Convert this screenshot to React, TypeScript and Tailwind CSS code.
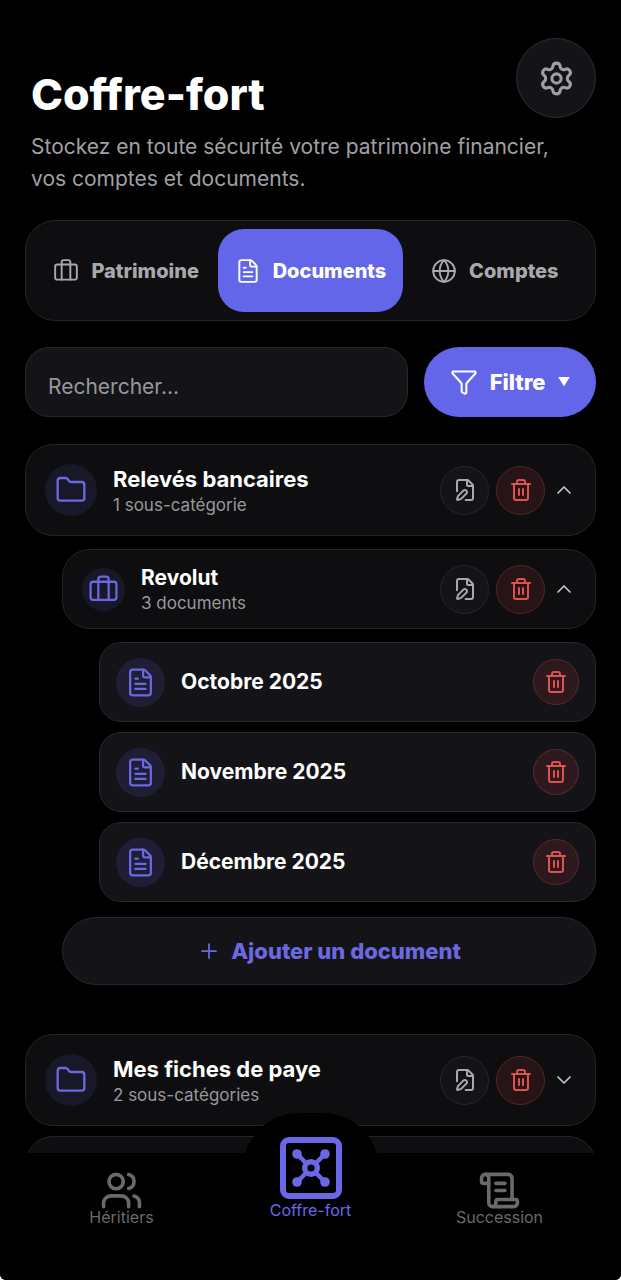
import { useState } from "react";
import type { ReactNode } from "react";
import {
  Briefcase,
  ChevronDown,
  ChevronUp,
  FilePen,
  FileText,
  Folder,
  Funnel,
  Globe,
  Plus,
  ScrollText,
  Settings,
  Trash2,
  Users,
} from "lucide-react";

const tabs = [
  { id: "patrimoine", label: "Patrimoine", icon: Briefcase },
  { id: "documents", label: "Documents", icon: FileText },
  { id: "comptes", label: "Comptes", icon: Globe },
];

const documents = ["Octobre 2025", "Novembre 2025", "Décembre 2025"];

function VaultIcon() {
  return (
    <svg width="62" height="62" viewBox="0 0 62 62" fill="none" stroke="currentColor" aria-hidden="true">
      <rect x="3" y="3" width="56" height="56" rx="6" strokeWidth="6" />
      <path d="M17 17l28 28M45 17L17 45" strokeWidth="4.5" />
      <g fill="currentColor" stroke="none">
        <circle cx="17" cy="17" r="4.8" />
        <circle cx="45" cy="17" r="4.8" />
        <circle cx="17" cy="45" r="4.8" />
        <circle cx="45" cy="45" r="4.8" />
      </g>
      <circle cx="31" cy="31" r="6.3" fill="#000" strokeWidth="5.4" />
    </svg>
  );
}

function DeleteButton({ label, small }: { label: string; small?: boolean }) {
  return (
    <button
      aria-label={label}
      className={`flex shrink-0 items-center justify-center rounded-full border text-[#e0524d] ${
        small ? "size-[46px] border-[#5a292b] bg-[#2d191d]" : "size-[49px] border-[#572523] bg-[#271416]"
      }`}
    >
      <Trash2 size={24} />
    </button>
  );
}

interface CategoryProps {
  title: string;
  subtitle: string;
  icon: ReactNode;
  sub?: boolean;
  defaultOpen?: boolean;
  children?: ReactNode;
}

function Category({ title, subtitle, icon, sub, defaultOpen = false, children }: CategoryProps) {
  const [open, setOpen] = useState(defaultOpen);

  return (
    <div>
      <div
        className={`flex items-center rounded-[28px] border border-[#242428] bg-[#0e0e10] px-[19px] ${
          sub ? "h-20" : "h-[92px]"
        }`}
      >
        <div
          className={`flex shrink-0 items-center justify-center rounded-full bg-[#181829] text-[#6b68e0] ${
            sub ? "size-[43px]" : "size-[52px]"
          }`}
        >
          {icon}
        </div>
        <div className="ml-4 min-w-0 flex-1 pt-0.5">
          <h2 className={`truncate font-bold text-white ${sub ? "text-[21px] leading-[26px]" : "text-[22px] leading-7"}`}>
            {title}
          </h2>
          <p className="text-[17px] leading-6 text-[#98989c]">{subtitle}</p>
        </div>
        <div className="flex items-center gap-[7px]">
          <button
            aria-label={`Renommer ${title}`}
            className="flex size-[49px] items-center justify-center rounded-full border border-[#27272b] bg-[#141418] text-[#a9a9ad]"
          >
            <FilePen size={24} />
          </button>
          <DeleteButton label={`Supprimer ${title}`} />
          <button
            aria-label={open ? "Replier" : "Déplier"}
            onClick={() => setOpen(!open)}
            className="flex items-center justify-center py-2 text-[#c4c4c8]"
          >
            {open ? <ChevronUp size={24} strokeWidth={1.75} /> : <ChevronDown size={24} strokeWidth={1.75} />}
          </button>
        </div>
      </div>
      {open && children}
    </div>
  );
}

export default function App() {
  const [tab, setTab] = useState("documents");
  const [search, setSearch] = useState("");

  return (
    <div className="h-screen bg-white">
      <div className="flex h-full flex-col overflow-hidden rounded-b-md bg-black font-['Inter',sans-serif]">
        <main className="min-h-0 flex-1 overflow-y-auto px-[25px] pt-[38px] [scrollbar-width:none]">
          <header>
            <div className="flex items-start justify-between pl-[6px]">
              <h1 className="pt-[30px] text-[43px] leading-[52px] font-extrabold text-white">Coffre-fort</h1>
              <button
                aria-label="Paramètres"
                className="flex size-20 items-center justify-center rounded-full border border-[#2d2d30] bg-[#141418] text-[#a0a0a3]"
              >
                <Settings size={37} />
              </button>
            </div>
            <p className="mt-[11px] pr-8 pl-[6px] text-[21px] leading-8 text-[#a0a0a3]">
              Stockez en toute sécurité votre patrimoine financier, vos comptes et documents.
            </p>
          </header>

          {/* Tabs */}
          <div className="mt-[25px] flex rounded-[30px] border border-[#242428] bg-[#0e0e10] p-2">
            {tabs.map(({ id, label, icon: Icon }) => (
              <button
                key={id}
                onClick={() => setTab(id)}
                className={`flex h-[83px] flex-1 basis-0 items-center justify-center gap-3 rounded-[26px] text-[20px] font-extrabold ${
                  tab === id ? "bg-[#6366e8] text-white" : "text-[#a9a9ad]"
                }`}
              >
                <Icon size={26} strokeWidth={1.75} className="shrink-0" />
                {label}
              </button>
            ))}
          </div>

          {/* Search and filter */}
          <div className="mt-[26px] flex gap-4">
            <input
              type="text"
              aria-label="Rechercher"
              placeholder="Rechercher..."
              value={search}
              onChange={(e) => setSearch(e.target.value)}
              className="h-[70px] min-w-0 flex-1 rounded-3xl border border-[#28282c] bg-[#141418] px-[22px] pt-2 text-[21px] text-white outline-none placeholder:text-[#98989c]"
            />
            <button className="flex h-[70px] w-[172px] items-center justify-center gap-3 rounded-full bg-[#6366e8] text-[22px] font-extrabold text-white">
              <Funnel size={28} strokeWidth={1.75} />
              Filtre
              <span className="text-xs">▼</span>
            </button>
          </div>

          <div className="mt-[27px]">
            <Category
              title="Relevés bancaires"
              subtitle="1 sous-catégorie"
              icon={<Folder size={32} strokeWidth={1.75} />}
              defaultOpen
            >
              <div className="mt-[13px] pl-[37px]">
                <Category
                  title="Revolut"
                  subtitle="3 documents"
                  icon={<Briefcase size={31} strokeWidth={1.75} />}
                  sub
                  defaultOpen
                >
                  <ul className="mt-[13px] flex flex-col gap-[10px] pl-[37px]">
                    {documents.map((name) => (
                      <li
                        key={name}
                        className="flex h-20 items-center gap-4 rounded-[22px] border border-[#28282c] bg-[#141418] px-4"
                      >
                        <div className="flex size-[49px] items-center justify-center rounded-full bg-[#1f1e35] text-[#6b68e0]">
                          <FileText size={31} strokeWidth={1.75} />
                        </div>
                        <span className="flex-1 text-[21px] font-bold text-white">{name}</span>
                        <DeleteButton label={`Supprimer ${name}`} small />
                      </li>
                    ))}
                  </ul>
                </Category>
                <button className="mt-[15px] flex h-[68px] w-full items-center justify-center gap-[10px] rounded-full border border-[#28282c] bg-[#141418] text-[22px] font-extrabold text-[#6b68e0]">
                  <Plus size={24} strokeWidth={1.75} />
                  Ajouter un document
                </button>
              </div>
            </Category>
          </div>

          <div className="mt-[49px]">
            <Category
              title="Mes fiches de paye"
              subtitle="2 sous-catégories"
              icon={<Folder size={32} strokeWidth={1.75} />}
            />
          </div>
          <div className="mt-[10px] h-[92px] rounded-[28px] border border-[#242428] bg-[#0e0e10]" />
        </main>

        <nav className="relative h-[127px] shrink-0 bg-black px-[27px] text-base leading-5">
          {/* Raised bump behind the active entry */}
          <div className="absolute -top-10 left-1/2 h-20 w-[136px] -translate-x-1/2 rounded-t-[56px] bg-black" />
          <div className="relative grid grid-cols-3">
            <a href="#heritiers" className="flex flex-col items-center pt-4 text-[#6a6a6c]">
              <Users size={43} />
              <span className="-mt-[5px]">Héritiers</span>
            </a>
            <a href="#coffre-fort" className="-mt-4 flex flex-col items-center gap-px text-[#6b68e8]">
              <VaultIcon />
              <span>Coffre-fort</span>
            </a>
            <a href="#succession" className="flex flex-col items-center pt-4 text-[#6a6a6c]">
              <ScrollText size={43} />
              <span className="-mt-[5px]">Succession</span>
            </a>
          </div>
        </nav>
      </div>
    </div>
  );
}
